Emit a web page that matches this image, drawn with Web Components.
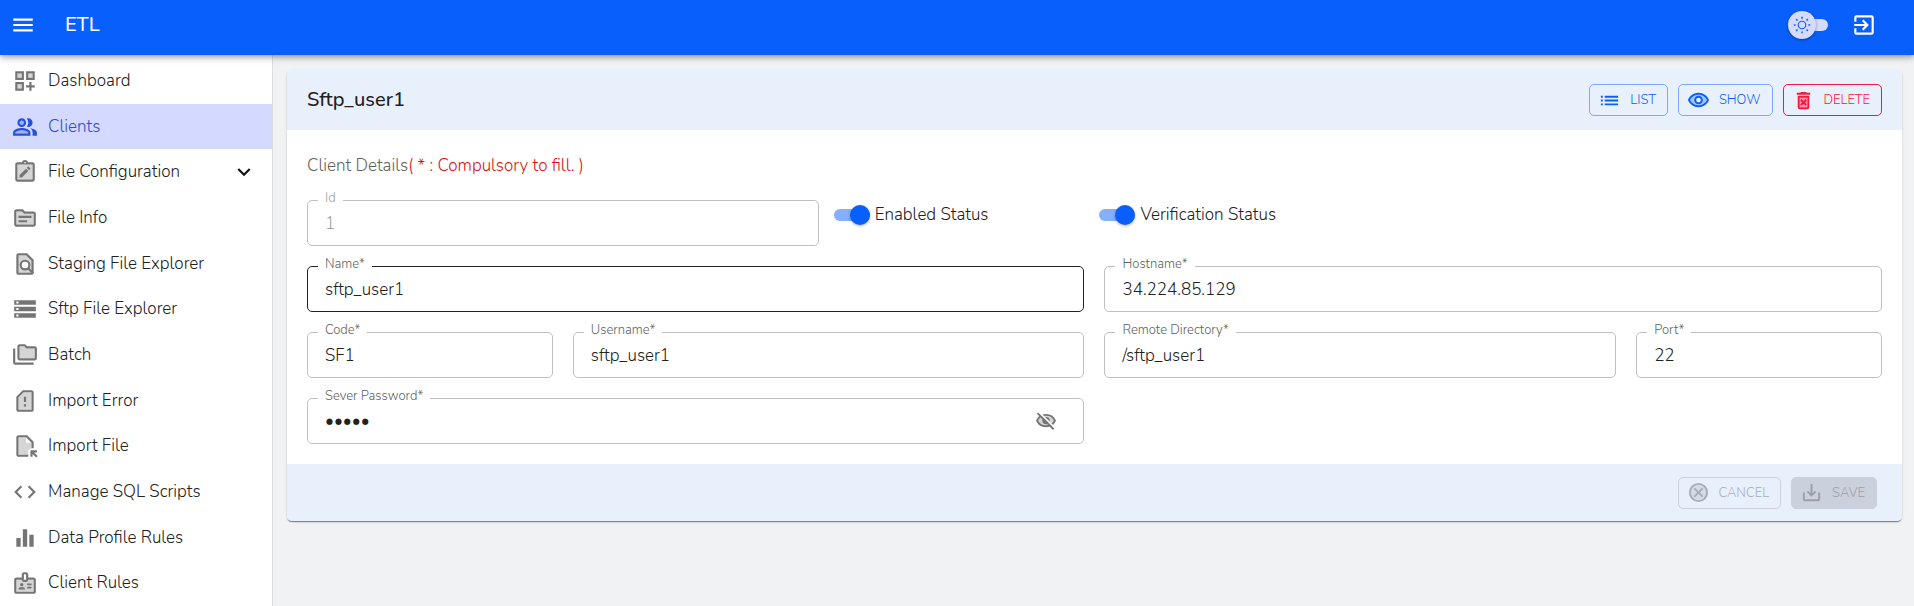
<!DOCTYPE html>
<html lang="en">
<head>
<meta charset="utf-8">
<title>ETL</title>
<style>
  html, body { margin: 0; height: 100%; }
  body {
    font-family: Nunito, Lato, "Open Sans", sans-serif;
    font-size: 17px; font-weight: 300; color: #212121;
    background: #f1f2f4;
    --primary: #095ffb; --danger: #f5173c; --tint: #e8f0fc;
  }
</style>
</head>
<body>
<etl-app></etl-app>
<script>
const define = (name, html, setup) => {
  const template = document.createElement('template');
  template.innerHTML = '<style>*{box-sizing:border-box}</style>' + html;
  customElements.define(name, class extends HTMLElement {
    connectedCallback() {
      if (this.shadowRoot) return;
      this.attachShadow({ mode: 'open' }).append(template.content.cloneNode(true));
      if (setup) setup(this, this.shadowRoot);
    }
  });
};

const ICONS = {
  menu: '<path d="M3 18h18v-2H3zM3 13h18v-2H3zM3 6v2h18V6z"/>',
  exit: '<path d="M19 3H5a2 2 0 0 0-2 2v4h2V5h14v14H5v-4H3v4a2 2 0 0 0 2 2h14a2 2 0 0 0 2-2V5a2 2 0 0 0-2-2zM10.1 15.6 11.5 17l5-5-5-5-1.4 1.4 2.6 2.6H3v2h9.7z"/>',
  dashboard: '<path opacity=".3" d="M5 5h4v4H5zM15 5h4v4h-4zM5 15h4v4H5z"/><path d="M3 11h8V3H3zm2-6h4v4H5zm8-2v8h8V3zm6 6h-4V5h4zM3 21h8v-8H3zm2-6h4v4H5zm13-2h-2v3h-3v2h3v3h2v-3h3v-2h-3z"/>',
  people: '<path opacity=".3" d="M9 15c-2.7 0-5.8 1.29-6 2.01V18h12v-1c-.2-.71-3.3-2-6-2z"/><circle opacity=".3" cx="9" cy="8" r="2"/><path d="M16.67 13.13C18.04 14.06 19 15.32 19 17v3h4v-3c0-2.18-3.57-3.47-6.33-3.87zM15 12c2.21 0 4-1.79 4-4s-1.79-4-4-4c-.47 0-.91.1-1.33.24C14.5 5.27 15 6.58 15 8s-.5 2.73-1.33 3.76c.42.14.86.24 1.33.24zM9 12c2.21 0 4-1.79 4-4s-1.79-4-4-4-4 1.79-4 4 1.79 4 4 4zm0-6c1.1 0 2 .9 2 2s-.9 2-2 2-2-.9-2-2 .9-2 2-2zm0 7c-2.67 0-8 1.34-8 4v3h16v-3c0-2.66-5.33-4-8-4zm6 5H3v-.99C3.2 16.29 6.3 15 9 15s5.8 1.29 6 2v1z"/>',
  config: '<path opacity=".3" d="M5 5h14v14H5z"/><path d="M19 3h-4.18C14.4 1.84 13.3 1 12 1s-2.4.84-2.82 2H5c-1.1 0-2 .9-2 2v14c0 1.1.9 2 2 2h14c1.1 0 2-.9 2-2V5c0-1.1-.9-2-2-2zm-7-.25a.75.75 0 1 1 0 1.5.75.75 0 0 1 0-1.5zM19 19H5V5h14z"/><path d="m15.08 11.03-2.12-2.12L7 14.86V17h2.1zM16.85 9.27c.2-.2.2-.51 0-.71l-1.41-1.41c-.2-.2-.51-.2-.71 0l-1.06 1.06 2.12 2.12z"/>',
  info: '<path opacity=".3" d="M4 6h5l2 2h9v10H4z"/><path d="M20 6h-8l-2-2H4c-1.1 0-2 .9-2 2v12c0 1.1.9 2 2 2h16c1.1 0 2-.9 2-2V8c0-1.1-.9-2-2-2zm0 12H4V6h5.17l2 2H20zM18 12H6v-2h12zm-4 4H6v-2h8z"/>',
  find: '<path fill-opacity=".3" stroke="currentColor" stroke-width="2" d="M13.5 3H6a1 1 0 0 0-1 1v16a1 1 0 0 0 1 1h12a1 1 0 0 0 1-1V8.5z"/><path stroke="currentColor" stroke-width="2" d="m14.5 15.5 5 5"/><circle cx="12" cy="13" r="4" fill="#fff" stroke="currentColor" stroke-width="2"/>',
  storage: '<path d="M2 20h20v-4H2zm2-3h2v2H4zM2 4v4h20V4zm4 3H4V5h2zm-4 7h20v-4H2zm2-3h2v2H4z"/>',
  batch: '<path opacity=".3" d="M7 4h4l2 2h8v9H7z"/><path d="M3 19h17v2H3c-1.1 0-2-.9-2-2V6h2zM23 6v9c0 1.1-.9 2-2 2H7c-1.1 0-2-.9-2-2V4c0-1.1.9-2 2-2h5l2 2h7c1.1 0 2 .9 2 2zM7 15h14V6h-7.83l-2-2H7z"/>',
  error: '<path opacity=".3" d="M6 9l5-5h7v16H6z"/><path d="M18 2h-8L4 8v12c0 1.1.9 2 2 2h12c1.1 0 2-.9 2-2V4c0-1.1-.9-2-2-2zm0 18H6V8.83L10.83 4H18zM11 15h2v2h-2zm0-7h2v5h-2z"/>',
  importFile: '<path opacity=".3" d="M6 4h7v5h5v5l-3 2v4H6z"/><path d="M15 22H6c-1.1 0-2-.9-2-2V4c0-1.1.9-2 2-2h8l6 6v6h-2V9h-5V4H6v16h9zM13 4v5h5zM17 16h6v2h-2.6l3.3 3.3-1.4 1.4-3.3-3.3V22h-2z"/>',
  code: '<path d="M9.4 16.6 4.8 12l4.6-4.6L8 6l-6 6 6 6zm5.2 0 4.6-4.6-4.6-4.6L16 6l6 6-6 6z"/>',
  bars: '<path d="M10 20h4V4h-4zm-6 0h4v-8H4zM16 9v11h4V9z"/>',
  badge: '<path opacity=".3" d="M4 9h5l2 2h2l2-2h5v11H4z"/><path d="M20 7h-5V4c0-1.1-.9-2-2-2h-2c-1.1 0-2 .9-2 2v3H4c-1.1 0-2 .9-2 2v11c0 1.1.9 2 2 2h16c1.1 0 2-.9 2-2V9c0-1.1-.9-2-2-2zM11 4h2v5h-2zm9 16H4V9h5c0 1.1.9 2 2 2h2c1.1 0 2-.9 2-2h5zM14 12.5h4V14h-4zm0 3h4V17h-4z"/><circle cx="9" cy="13.5" r="1.5"/><path d="M11.08 16.18a5.2 5.2 0 0 0-4.16 0c-.56.24-.92.79-.92 1.39V18h6v-.43c0-.6-.36-1.15-.92-1.39z"/>',
  chevron: '<path fill="none" stroke="currentColor" stroke-width="2" d="m6.7 9.2 5.3 5.3 5.3-5.3"/>',
  list: '<path d="M3 11h2v2H3zm0 4h2v2H3zm0-8h2v2H3zm4 4h14v2H7zm0 4h14v2H7zm0-8h14v2H7z"/>',
  eye: '<path opacity=".3" d="M12 6c-3.8 0-7.2 2.1-8.8 5.5C4.8 14.9 8.2 17 12 17s7.2-2.1 8.8-5.5C19.2 8.1 15.8 6 12 6zm0 8a2.5 2.5 0 1 1 0-5 2.5 2.5 0 0 1 0 5z"/><path d="M12 4C7 4 2.73 7.11 1 11.5 2.73 15.89 7 19 12 19s9.27-3.11 11-7.5C21.27 7.11 17 4 12 4zm0 13c-3.79 0-7.17-2.13-8.82-5.5C4.83 8.13 8.21 6 12 6s7.17 2.13 8.82 5.5C19.17 14.87 15.79 17 12 17zm0-10a4.5 4.5 0 1 0 0 9 4.5 4.5 0 0 0 0-9zm0 7a2.5 2.5 0 1 1 0-5 2.5 2.5 0 0 1 0 5z"/>',
  eyeOff: '<path fill-opacity=".3" stroke="currentColor" stroke-width="2" d="M2.2 11.5C4 7.5 7.6 5.3 12 5.3S20 7.5 21.8 11.5C20 15.5 16.4 17.7 12 17.7S4 15.5 2.2 11.5z"/><circle cx="12" cy="11.5" r="4"/><path stroke="#fff" stroke-width="2" d="M4.5 2.5 22 20"/><path stroke="currentColor" stroke-width="2" d="M2.7 3.5 20.3 21"/>',
  trash: '<path opacity=".4" d="M8 9h8v10H8z"/><path fill="none" stroke="currentColor" stroke-width="2" d="M7 8h10v11a1 1 0 0 1-1 1H8a1 1 0 0 1-1-1z"/><path d="m15.5 4-1-1h-5l-1 1H5v2h14V4z"/><path stroke="currentColor" stroke-width="2" d="m9.2 11.2 5.6 5.6m0-5.6-5.6 5.6"/>',
  cancel: '<circle opacity=".3" cx="12" cy="12" r="9"/><circle cx="12" cy="12" r="9" fill="none" stroke="currentColor" stroke-width="2"/><path stroke="currentColor" stroke-width="2" d="m7.7 7.7 8.6 8.6m0-8.6-8.6 8.6"/>',
  save: '<path d="M19 12v7H5v-7H3v7c0 1.1.9 2 2 2h14c1.1 0 2-.9 2-2v-7zm-6 .67 2.59-2.58L17 11.5l-5 5-5-5 1.41-1.41L11 12.67V3h2z"/>',
  sun: '<circle cx="12" cy="12" r="5" fill="none" stroke="currentColor" stroke-width="1.6"/><path stroke="currentColor" stroke-width="2" d="M12 1v2.5M12 20.5V23M1 12h2.5M20.5 12H23M4.2 4.2 6 6M18 18l1.8 1.8M4.2 19.8 6 18M18 6l1.8-1.8"/>'
};

define('etl-icon', `
  <style>
    :host { display: block; flex: none; width: var(--icon-size, 26px); height: var(--icon-size, 26px); }
    svg { display: block; width: 100%; height: 100%; fill: currentColor; }
  </style>
  <svg viewBox="0 0 24 24" aria-hidden="true"></svg>`,
  (el, root) => { root.querySelector('svg').innerHTML = ICONS[el.getAttribute('name')]; });

define('etl-top-bar', `
  <style>
    :host { display: flex; align-items: center; height: 55px; flex: none; padding: 0 37px 5px 10px;
      background: var(--primary); color: #fff; position: relative; z-index: 2;
      box-shadow: 0 2px 4px -1px rgba(0,0,0,.2), 0 4px 5px rgba(0,0,0,.14), 0 1px 10px rgba(0,0,0,.12); }
    button { all: unset; cursor: pointer; }
    h1 { flex: 1; margin: 0 0 0 29px; font-size: 20px; font-weight: 500; line-height: 24px; }
    label { display: grid; align-items: center; width: 40px; height: 28px; margin-right: 23px; color: var(--primary); --icon-size: 18px; }
    label > * { grid-area: 1 / 1; }
    input { appearance: none; margin: 0 0 0 6px; width: 34px; height: 12px; border-radius: 6px; background: #d5dbff; }
    .thumb { display: grid; place-items: center; width: 28px; height: 28px; border-radius: 50%; background: #d5dbff;
      box-shadow: 0 1px 3px rgba(0,0,0,.4); z-index: 1; }
  </style>
  <button aria-label="Toggle menu"><etl-icon name="menu"></etl-icon></button>
  <h1><slot></slot></h1>
  <label><input type="checkbox" role="switch" aria-label="Dark mode"><span class="thumb"><etl-icon name="sun"></etl-icon></span></label>
  <button aria-label="Log out"><etl-icon name="exit"></etl-icon></button>`);

define('etl-nav-item', `
  <style>
    :host { display: flex; flex: 1 0 auto; min-height: 36px; }
    a { flex: 1; display: flex; align-items: center; gap: 10px; padding: 0 15px 0 12px; color: inherit; text-decoration: none; line-height: 24px; }
    etl-icon { color: #757575; }
    span { flex: 1; }
    .more { color: #111; }
    :host([active]) a { background: #d4daff; color: #2d4bd3; }
    :host([active]) etl-icon { color: #2450dc; }
  </style>
  <a href="#"><span><slot></slot></span></a>`,
  (el, root) => {
    const link = root.querySelector('a');
    const icon = (name, cls) => {
      const node = document.createElement('etl-icon');
      node.setAttribute('name', name);
      node.className = cls;
      return node;
    };
    link.prepend(icon(el.getAttribute('icon'), 'lead'));
    if (el.hasAttribute('expandable')) link.append(icon('chevron', 'more'));
  });

define('etl-side-nav', `
  <style>
    :host { display: block; flex: none; width: 273px; background: #fff; border-right: 1px solid #dcdee1; }
    nav { display: flex; flex-direction: column; height: 100%; padding-top: 3px; }
  </style>
  <nav><slot></slot></nav>`);

define('etl-button', `
  <style>
    :host { display: block; --icon-size: 23px; }
    button { display: flex; align-items: center; gap: 9px; height: 32px; margin: 0; padding: 0 11px 0 8px;
      font: inherit; font-size: 13px; line-height: 24px; text-transform: uppercase; border-radius: 5px;
      color: var(--primary); border: 1px solid #7ba8fb; background: none; cursor: pointer; }
    :host([kind=danger]) button { color: var(--danger); border-color: var(--danger); }
    button:disabled { color: #a7adb7; border-color: #cbd1dc; cursor: default; }
    :host([kind=solid]) button:disabled { background: #cbd1dc; color: #9a9fa8; }
  </style>
  <button type="button"><slot name="icon"></slot><span><slot></slot></span></button>`,
  (el, root) => { root.querySelector('button').disabled = el.hasAttribute('disabled'); });

define('etl-field', `
  <style>
    :host { display: block; position: relative; }
    .box { display: flex; align-items: center; height: 46px; border: 1px solid #bfbfbf; border-radius: 5px; padding: 0 26px 0 17px; }
    label { position: absolute; top: -10px; left: 11px; padding: 0 7px; font-size: 13px; line-height: 16px; background: #fff; color: #616161; }
    input { flex: 1; min-width: 0; border: 0; padding: 0; outline: 0; background: none; font: inherit; color: inherit; height: 24px; }
    :host([highlighted]) .box { border-color: #212121; }
    :host([disabled]) :is(input, label) { color: #9e9e9e; }
  </style>
  <label for="input"></label>
  <div class="box"><input id="input"><slot></slot></div>`,
  (el, root) => {
    const input = root.querySelector('input');
    root.querySelector('label').textContent = el.getAttribute('label');
    input.type = el.getAttribute('type') || 'text';
    input.value = el.getAttribute('value');
    input.disabled = el.hasAttribute('disabled');
  });

define('etl-switch', `
  <style>
    :host { display: block; margin-left: -5px; }
    label { display: flex; align-items: center; gap: 5px; line-height: 30px; }
    input { appearance: none; position: relative; flex: none; margin: 0; width: 36px; height: 12px; border-radius: 6px; background: #84affd; }
    input::before { content: ""; position: absolute; right: 0; top: -4px; width: 20px; height: 20px; border-radius: 50%;
      background: var(--primary); box-shadow: 0 1px 3px rgba(0,0,0,.3); }
  </style>
  <label><input type="checkbox" role="switch" checked><span><slot></slot></span></label>`);

define('etl-card', `
  <style>
    :host { display: block; border-radius: 5px; background: #fff; overflow: hidden;
      box-shadow: 0 2px 1px -1px rgba(0,0,0,.3), 0 1px 1px rgba(0,0,0,.2), 0 1px 3px rgba(0,0,0,.12); }
    header, footer { display: flex; align-items: center; background: var(--tint); gap: 10px; }
    header { height: 60px; padding: 0 20px; }
    footer { height: 57px; padding: 0 25px; justify-content: flex-end; }
    h2 { flex: 1; margin: 0; font-size: 20px; font-weight: 500; line-height: 24px; }
    .actions { display: flex; gap: 10px; }
    section { padding: 20px; }
  </style>
  <header><h2><slot name="title"></slot></h2><div class="actions"><slot name="actions"></slot></div></header>
  <section><slot></slot></section>
  <footer><slot name="footer"></slot></footer>`);

define('etl-client-form', `
  <style>
    :host { display: block; }
    p { margin: 0 0 18px; line-height: 32px; color: #616161; }
    em { font-style: normal; color: #e01010; }
    .grid { display: grid; grid-template-columns: repeat(12, minmax(0, 1fr)); gap: 20px; }
    .s2 { grid-column: span 2; } .s4 { grid-column: span 4; } .s6 { grid-column: span 6; }
    button { all: unset; color: #757575; cursor: pointer; --icon-size: 22px; }
  </style>
  <p>Client Details<em>( * : Compulsory to fill. )</em></p>
  <div class="grid">
    <etl-field class="s4" label="Id" value="1" disabled></etl-field>
    <etl-switch class="s2">Enabled Status</etl-switch>
    <etl-switch class="s6">Verification Status</etl-switch>
    <etl-field class="s6" label="Name*" value="sftp_user1" highlighted></etl-field>
    <etl-field class="s6" label="Hostname*" value="34.224.85.129"></etl-field>
    <etl-field class="s2" label="Code*" value="SF1"></etl-field>
    <etl-field class="s4" label="Username*" value="sftp_user1"></etl-field>
    <etl-field class="s4" label="Remote Directory*" value="/sftp_user1"></etl-field>
    <etl-field class="s2" label="Port*" value="22"></etl-field>
    <etl-field class="s6" label="Sever Password*" type="password" value="admin"><button aria-label="Show password"><etl-icon name="eyeOff"></etl-icon></button></etl-field>
  </div>`);

define('etl-app', `
  <style>
    :host { display: flex; flex-direction: column; min-height: 100vh; }
    .body { flex: 1; display: flex; }
    main { flex: 1; min-width: 0; padding: 15px 12px 15px 14px; }
  </style>
  <etl-top-bar>ETL</etl-top-bar>
  <div class="body">
    <etl-side-nav>
      <etl-nav-item icon="dashboard">Dashboard</etl-nav-item>
      <etl-nav-item icon="people" active>Clients</etl-nav-item>
      <etl-nav-item icon="config" expandable>File Configuration</etl-nav-item>
      <etl-nav-item icon="info">File Info</etl-nav-item>
      <etl-nav-item icon="find">Staging File Explorer</etl-nav-item>
      <etl-nav-item icon="storage">Sftp File Explorer</etl-nav-item>
      <etl-nav-item icon="batch">Batch</etl-nav-item>
      <etl-nav-item icon="error">Import Error</etl-nav-item>
      <etl-nav-item icon="importFile">Import File</etl-nav-item>
      <etl-nav-item icon="code">Manage SQL Scripts</etl-nav-item>
      <etl-nav-item icon="bars">Data Profile Rules</etl-nav-item>
      <etl-nav-item icon="badge">Client Rules</etl-nav-item>
    </etl-side-nav>
    <main>
      <etl-card>
        <span slot="title">Sftp_user1</span>
        <etl-button slot="actions"><etl-icon slot="icon" name="list"></etl-icon>List</etl-button>
        <etl-button slot="actions"><etl-icon slot="icon" name="eye"></etl-icon>Show</etl-button>
        <etl-button slot="actions" kind="danger"><etl-icon slot="icon" name="trash"></etl-icon>Delete</etl-button>
        <etl-client-form></etl-client-form>
        <etl-button slot="footer" disabled><etl-icon slot="icon" name="cancel"></etl-icon>Cancel</etl-button>
        <etl-button slot="footer" kind="solid" disabled><etl-icon slot="icon" name="save"></etl-icon>Save</etl-button>
      </etl-card>
    </main>
  </div>`);
</script>
</body>
</html>
